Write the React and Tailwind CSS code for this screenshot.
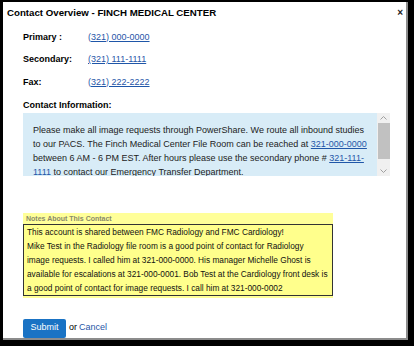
import React from 'react';

const phones = [
    { label: 'Primary :', number: '(321) 000-0000' },
    { label: 'Secondary:', number: '(321) 111-1111' },
    { label: 'Fax:', number: '(321) 222-2222' },
];

const notes = [
    'This account is shared between FMC Radiology and FMC Cardiology!',
    'Mike Test in the Radiology file room is a good point of contact for Radiology',
    'image requests. I called him at 321-000-0000. His manager Michelle Ghost is',
    'available for escalations at 321-000-0001. Bob Test at the Cardiology front desk is',
    'a good point of contact for image requests. I call him at 321-000-0002',
];

function ChevronUp() {
    return (
        <svg width="7" height="4" viewBox="0 0 7 4">
            <path d="M0.5 3.5 L3.5 0.5 L6.5 3.5" fill="none" stroke="#a0a0a0" strokeWidth="1" />
        </svg>
    );
}

function ChevronDown() {
    return (
        <svg width="7" height="4" viewBox="0 0 7 4">
            <path d="M0.5 0.5 L3.5 3.5 L6.5 0.5" fill="none" stroke="#a0a0a0" strokeWidth="1" />
        </svg>
    );
}

export default function App() {
    return (
        <div className="w-[414px] h-[346px] bg-black pt-[2px] pl-[3px] pr-[6px] pb-[6px] font-['Liberation_Sans',Arial,sans-serif] text-black overflow-hidden">
            <div className="h-full bg-white border-r-2 border-b-2 border-[#8c8c8c] flex flex-col">
                {/* title bar */}
                <div className="h-[22px] flex items-center justify-between pl-[4px] pr-[3px]">
                    <span className="text-[9.7px] font-bold">Contact Overview - FINCH MEDICAL CENTER</span>
                    <span className="text-[10px] font-bold leading-none text-[#222]">×</span>
                </div>

                <div className="pl-[20px] pt-[2px] flex flex-col">
                    {phones.map((p) => (
                        <div key={p.label} className="h-[22.5px] flex items-center text-[9px]">
                            <span className="w-[65px] font-bold">{p.label}</span>
                            <a href="#" className="text-[#1f56a8] underline">{p.number}</a>
                        </div>
                    ))}

                    <div className="pt-[4px] leading-[14px] text-[9px] font-bold">Contact Information:</div>

                    <div className="mt-[1px] w-[367px] h-[63px] bg-[#d8ecf7] flex overflow-hidden">
                        <div className="flex-1 pl-[10px] pt-[10px] text-[9px] leading-[14px] text-[#222] whitespace-nowrap">
                            Please make all image requests through PowerShare. We route all inbound studies<br />
                            to our PACS. The Finch Medical Center File Room can be reached at{' '}
                            <a href="#" className="text-[#1f56a8] underline">321-000-0000</a><br />
                            between 6 AM - 6 PM EST. After hours please use the secondary phone #{' '}
                            <a href="#" className="text-[#1f56a8] underline">321-111-<br />1111</a> to contact our
                            Emergency Transfer Department.
                        </div>
                        <div className="w-[13px] bg-[#f0f0f0] flex flex-col items-center">
                            <div className="h-[10px] flex items-center justify-center"><ChevronUp /></div>
                            <div className="w-[12px] h-[36px] bg-[#c1c1c1]"></div>
                            <div className="flex-1"></div>
                            <div className="h-[10px] flex items-center justify-center"><ChevronDown /></div>
                        </div>
                    </div>

                    {/* notes */}
                    <div className="mt-[37px] w-[310px] bg-[#ffff99] pb-[2px]">
                        <div className="h-[11px] leading-[11px] pl-[3px] text-[7px] font-bold text-[#8a8a6a]">Notes About This Contact</div>
                        <div className="border border-[#333] bg-[#ffff8c] px-[3px] text-[8.3px] leading-[14px] text-[#111]">
                            {notes.map((line) => (
                                <div key={line} className="whitespace-nowrap">{line}</div>
                            ))}
                        </div>
                    </div>

                    <div className="mt-[21px] flex items-center text-[9px]">
                        <button className="w-[43px] h-[19px] bg-[#1a73c4] text-white rounded-[2px]">Submit</button>
                        <span className="ml-[3px]">or</span>
                        <a href="#" className="ml-[2px] text-[#1f56a8]">Cancel</a>
                    </div>
                </div>
            </div>
        </div>
    );
}
